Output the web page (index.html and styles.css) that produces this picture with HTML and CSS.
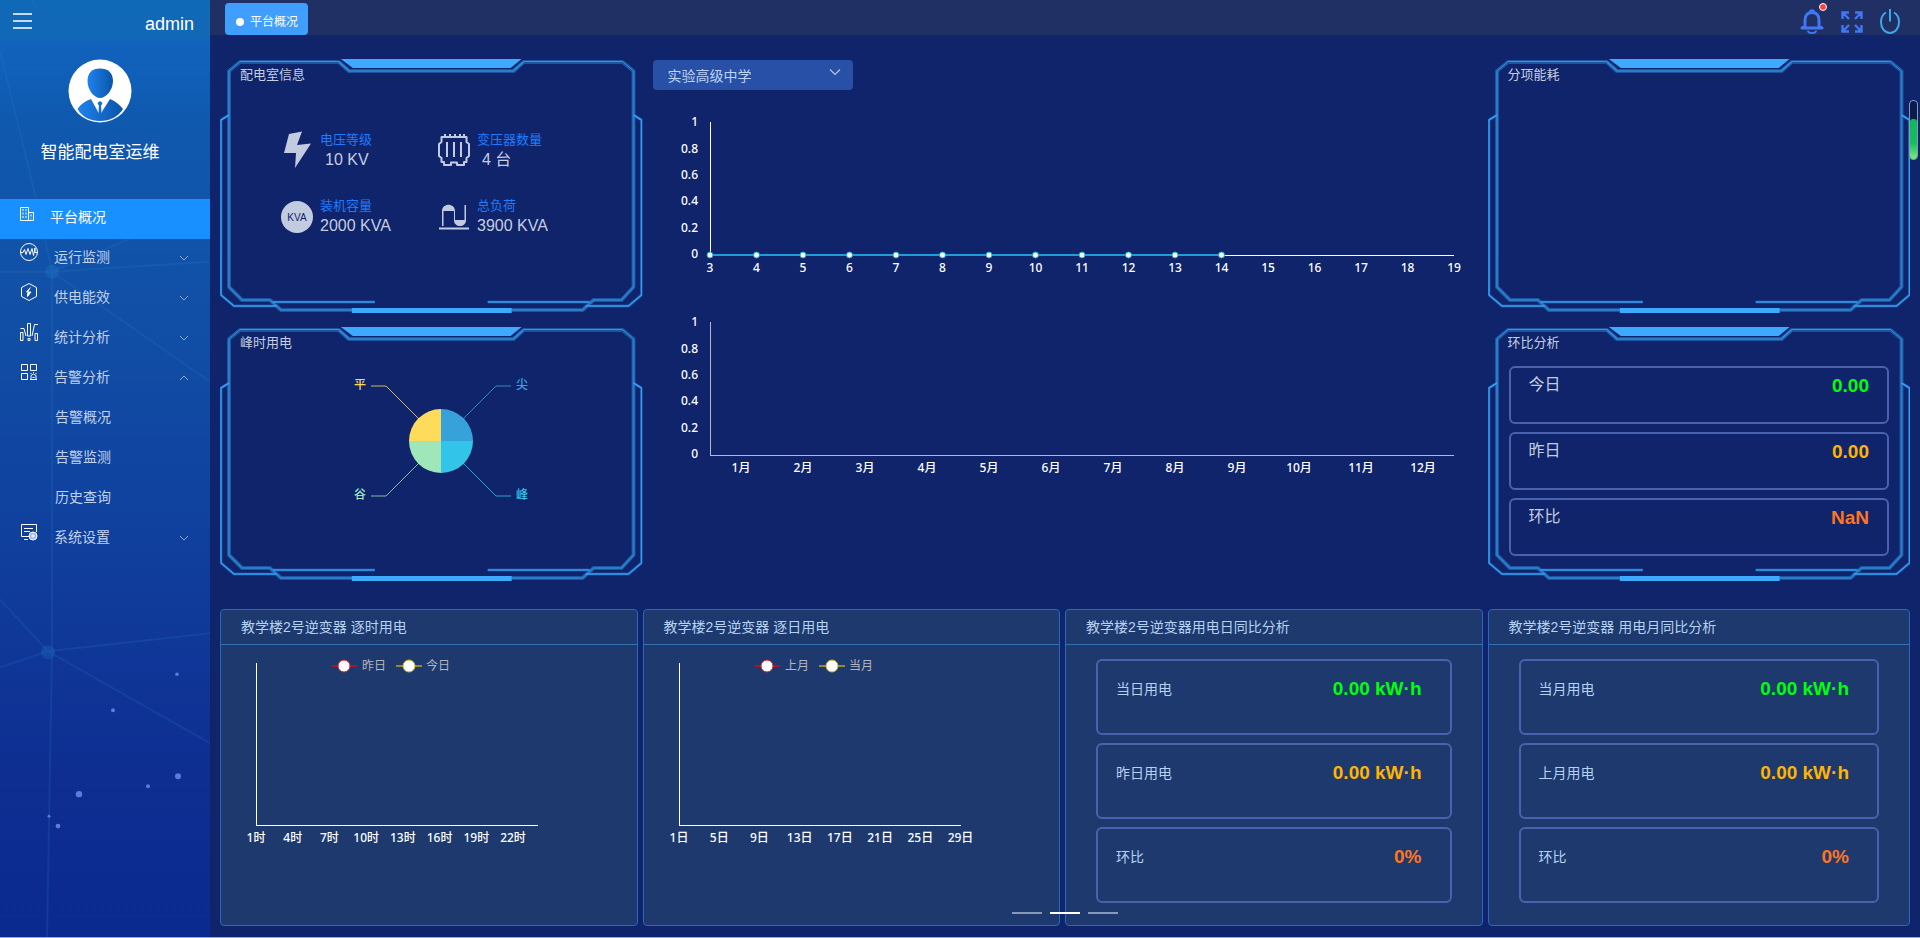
FILE: index.html
```html
<!DOCTYPE html>
<html lang="zh-CN">
<head>
<meta charset="utf-8">
<title>智能配电室运维</title>
<link rel="stylesheet" href="styles.css">
</head>
<body>
<svg class="defs" aria-hidden="true">
  <symbol id="frame" viewBox="0 0 423 254" preserveAspectRatio="none">
    <g fill="none" stroke-linejoin="round">
      <g stroke="#1c559f" stroke-width="4">
        <path d="M9 12 20 3H119L129 12H294L304 3H403L414 12V228L402 241H374L363 251H61L50 241H22L9 228Z"/>
      </g>
      <g stroke="#1a4b98" stroke-width="3">
        <path d="M9 56 1 61V236L14 247H57M53 243H155M414 56 422 61V236L409 247H366M370 243H268"/>
      </g>
      <path stroke="#2a7ccb" stroke-width="2" d="M9 12V228L22 241H50L61 251H363L374 241H402L414 228V12M119 3 129 12H294L304 3"/>
      <path stroke="#3496e8" stroke-width="1" d="M9 12 20 2.500H119L129 11M294 11 304 2.500H403L414 12"/>
      <path stroke="#37a0f5" stroke-width="1.500" d="M9 56 1 61V236L14 247H57M53 243H155M414 56 422 61V236L409 247H366M370 243H268"/>
    </g>
    <path fill="#3da9ff" d="M121 0H302L291 9H133ZM132 249H292V254H132Z"/>
  </symbol>
  <symbol id="chev" viewBox="0 0 10 10"><path d="M1 3 5 7 9 3" fill="none" stroke="currentColor"/></symbol>
</svg>

<div class="app">
  <aside class="sidebar">
    <svg class="stars" viewBox="0 0 210 938" preserveAspectRatio="none" aria-hidden="true">
      <g stroke="#2f86cf" fill="none" opacity=".16" stroke-width="2">
        <path d="M0 50 36 199 52 272 52 652 47 938M52 272H0M52 272 130 239M52 272 210 262M52 272 210 382M48 652 0 600M48 652 0 668M48 652 210 634M48 652 210 744M32 0 36 8"/>
      </g>
      <g fill="#2a8fd0" opacity=".2"><circle cx="52" cy="272" r="7"/><circle cx="48" cy="653" r="7"/></g>
      <g fill="#5d7bdc"><circle cx="177" cy="675" r="1.800"/><circle cx="113" cy="711" r="2"/><circle cx="178" cy="777" r="3"/><circle cx="148" cy="787" r="2"/><circle cx="79" cy="795" r="3.200"/><circle cx="49" cy="817" r="1.500"/><circle cx="58" cy="827" r="2.400"/></g>
    </svg>
    <div class="side-top">
      <button class="icon-btn" aria-label="折叠菜单"><svg width="20" height="16" viewBox="0 0 20 16"><path d="M0 1H19M0 8H19M0 15H19" stroke="#fff" stroke-width="1.400"/></svg></button>
      <span class="user">admin</span>
    </div>
    <div class="profile">
      <svg width="64" height="64" viewBox="0 0 64 64" aria-hidden="true">
        <defs><linearGradient id="av"><stop offset="0" stop-color="#1f82ee"/><stop offset="1" stop-color="#0a55a8"/></linearGradient></defs>
        <circle cx="32" cy="32" r="31.500" fill="#fff"/>
        <path fill="url(#av)" d="M32 9.500C40 9.500 45 14 45 22C45 31 38 39 32 39C26 39 19.500 31 19.500 22C19.500 14 24 9.500 32 9.500Z"/>
        <path fill="url(#av)" d="M23 40 29 51 31 47 29.500 44 32 42 34.500 44 33 47 35 51 42 40C47 42 52 46 55 50C50 58 42 62 32 62C22 62 14 58 9.500 50C13 45 17 42 23 40Z"/>
        <path fill="#fff" d="M29 51 31 46 30.500 54ZM35 51 33 46 33.500 54Z"/>
      </svg>
      <h1>智能配电室运维</h1>
    </div>
    <nav class="menu">
      <a href="#" class="item active"><svg class="mi" viewBox="0 0 18 18"><path d="M.5 2.500H8.500V15.500H.5ZM8.500 7.500H13.500V15.500H8.500" /><path stroke-dasharray="2 1.500" d="M3 4V14M6 4V14M11 9.500V13.500"/></svg><span>平台概况</span></a>
      <a href="#" class="item"><svg class="mi" viewBox="0 0 18 18"><circle cx="9" cy="9" r="8.500"/><path d="M1 9.500H3L4.500 6.500 6 11.500 8 5.500 10 11.500 12 5.500 13.500 12.500 15 5V9.500H17"/></svg><span>运行监测</span><svg class="arrow"><use href="#chev"/></svg></a>
      <a href="#" class="item"><svg class="mi" viewBox="0 0 18 18"><path d="M9 .5 16.500 4.500V13.500L9 17.500 1.500 13.500V4.500Z"/><path fill="#fff" d="M10.500 4.500 6.500 9H11L7.500 13.500V10.500"/></svg><span>供电能效</span><svg class="arrow"><use href="#chev"/></svg></a>
      <a href="#" class="item"><svg class="mi" viewBox="0 0 18 18"><path d="M.5 9.500H3V17.500H.5ZM7.500.5H10.500V13H7.500ZM15 10.500H17.500V17.500H15ZM8 15.500H10V17.500H8ZM.5 5.500H4L6 13M18 1.500H14.500L12 13"/></svg><span>统计分析</span><svg class="arrow"><use href="#chev"/></svg></a>
      <a href="#" class="item"><svg class="mi" viewBox="0 0 18 18"><path d="M1.500 1.500H7.500V7.500H1.500ZM10.500 1.500H16.500V7.500H10.500ZM1.500 10.500H7.500V16.500H1.500ZM10 16.500H17M11 16V12.500L13.500 11 16 12.500V16M12.500 14.500H14.500M13.500 9V10M10.500 10 11.500 11M16.500 10 15.500 11"/></svg><span>告警分析</span><svg class="arrow up"><use href="#chev"/></svg></a>
      <a href="#" class="item sub"><span>告警概况</span></a>
      <a href="#" class="item sub"><span>告警监测</span></a>
      <a href="#" class="item sub"><span>历史查询</span></a>
      <a href="#" class="item"><svg class="mi" viewBox="0 0 18 18"><path d="M9 13.500H1.500V1.500H16.500V9M4 5.500H13M4 8.500H10M4 16.500H8"/><circle cx="13" cy="13" r="4" fill="#9fb8e6"/><circle cx="13" cy="13" r="1.200"/></svg><span>系统设置</span><svg class="arrow"><use href="#chev"/></svg></a>
    </nav>
  </aside>

  <main class="main">
    <header class="topbar">
      <button class="tab"><i></i>平台概况</button>
      <div class="tools">
        <button class="icon-btn bell" aria-label="告警"><svg width="24" height="25" viewBox="0 0 24 25"><path d="M5 17V11C5 6 8 3.500 12 3.500C16 3.500 19 6 19 11V17L22 19H2Z" fill="none" stroke="#4077f5" stroke-width="3" stroke-linejoin="round"/><path d="M8 21.500A4 2.500 0 0 0 16 21.500M10 3C10 .5 14 .5 14 3" fill="none" stroke="#4077f5" stroke-width="2"/></svg><i class="badge"></i></button>
        <button class="icon-btn" aria-label="全屏"><svg width="22" height="24" viewBox="0 -2 22 24"><path d="M1.500 8V1.500H8M2 2 8 8M14 1.500H20.500V8M20 2 14 8M1.500 14V20.500H8M2 20 8 14M14 20.500H20.500V14M20 20 14 14" fill="none" stroke="#4077f5" stroke-width="2.400"/></svg></button>
        <button class="icon-btn" aria-label="退出"><svg width="20" height="25" viewBox="0 0 20 25"><path d="M6 3.500C2.500 5.500 1 9 1 13C1 19.500 5 24 10 24C15 24 19 19.500 19 13C19 9 17.500 5.500 14 3.500M10 0V12.500" fill="none" stroke="#3ca9ea" stroke-width="2"/></svg></button>
      </div>
    </header>

    <div class="content">
      <div class="upper">
        <div class="col">
          <section class="panel">
            <svg class="frame"><use href="#frame"/></svg>
            <h2>配电室信息</h2>
            <div class="stats">
              <div class="stat"><svg width="32" height="40" viewBox="0 0 32 40"><path fill="#c3cbe0" d="M8 4 21 1.500 16 15 30 13.500 14 38 15 23H3Z"/></svg><dl><dt>电压等级</dt><dd class="in">10 KV</dd></dl></div>
              <div class="stat"><svg width="32" height="40" viewBox="0 0 32 40"><path fill="none" stroke="#c3cbe0" stroke-width="2" stroke-linejoin="round" d="M3.500 7H28.500V12L31 14V26L28.500 28V32H26V35H19V32.500H13V35H6V32H3.500V28L1 26V14L3.500 12ZM7 7V4M12 7V4M17 7V4M22 7V4M26 7V4M9 12V27M16 12V27M23 12V27"/></svg><dl><dt>变压器数量</dt><dd class="in">4 台</dd></dl></div>
              <div class="stat"><svg width="32" height="40" viewBox="0 0 32 40"><circle cx="16" cy="21" r="16" fill="#c3cbe0"/><text class="kva" x="16" y="25">KVA</text></svg><dl><dt>装机容量</dt><dd>2000 KVA</dd></dl></div>
              <div class="stat"><svg width="32" height="40" viewBox="0 0 32 40"><path fill="#c3cbe0" fill-rule="evenodd" d="M4 30V15C4 6.500 17 6.500 17 15V24H26.500V9H28V24C28 32 16 32 16 24V15H5.500V30ZM1 31.500H31V33.500H1Z"/></svg><dl><dt>总负荷</dt><dd>3900 KVA</dd></dl></div>
            </div>
          </section>
          <section class="panel">
            <svg class="frame"><use href="#frame"/></svg>
            <h2>峰时用电</h2>
            <svg class="pie" width="200" height="128" viewBox="-100 -64 200 128">
              <path fill="#37a2da" d="M0 0V-32A32 32 0 0 1 32 0Z"/><path fill="#32c5e9" d="M0 0H32A32 32 0 0 1 0 32Z"/><path fill="#9fe6b8" d="M0 0V32A32 32 0 0 1 -32 0Z"/><path fill="#ffdb5c" d="M0 0H-32A32 32 0 0 1 0 -32Z"/>
              <g fill="none" opacity=".8"><path stroke="#37a2da" d="M22 -22 55 -55H70"/><path stroke="#32c5e9" d="M22 22 55 55H70"/><path stroke="#9fe6b8" d="M-22 22 -55 55H-70"/><path stroke="#ffdb5c" d="M-22 -22 -55 -55H-70"/></g>
              <text x="75" y="-52" fill="#37a2da">尖</text><text x="75" y="58" fill="#32c5e9">峰</text><text class="e" x="-75" y="58" fill="#9fe6b8">谷</text><text class="e" x="-75" y="-52" fill="#ffdb5c">平</text>
            </svg>
          </section>
        </div>

        <div class="center">
          <div class="picker"><select aria-label="站点"><option>实验高级中学</option></select><svg width="12" height="12" viewBox="0 0 12 12"><path d="M1 3.500 6 8.500 11 3.500" fill="none" stroke="#b9c6e2" stroke-width="1.200"/></svg></div>
          <svg class="chart" height="200">
            <g class="axis"><line x1="0" y1="0" x2="0" y2="133"/><line x1="0" y1="133" x2="100%" y2="133"/></g>
            <g class="e"><text x="-12" y="4">1</text><text x="-12" y="31">0.8</text><text x="-12" y="57">0.6</text><text x="-12" y="83">0.4</text><text x="-12" y="110">0.2</text><text x="-12" y="136">0</text></g>
            <line x1="0" y1="133" x2="68.750%" y2="133" stroke="#1d9fd4" stroke-width="2"/>
            <g fill="#fff" stroke="#1d9fd4"><circle cx="0" cy="133" r="3"/><circle cx="6.250%" cy="133" r="3"/><circle cx="12.500%" cy="133" r="3"/><circle cx="18.750%" cy="133" r="3"/><circle cx="25%" cy="133" r="3"/><circle cx="31.250%" cy="133" r="3"/><circle cx="37.500%" cy="133" r="3"/><circle cx="43.750%" cy="133" r="3"/><circle cx="50%" cy="133" r="3"/><circle cx="56.250%" cy="133" r="3"/><circle cx="62.500%" cy="133" r="3"/><circle cx="68.750%" cy="133" r="3"/></g>
            <g class="m"><text x="0" y="150">3</text><text x="6.250%" y="150">4</text><text x="12.500%" y="150">5</text><text x="18.750%" y="150">6</text><text x="25%" y="150">7</text><text x="31.250%" y="150">8</text><text x="37.500%" y="150">9</text><text x="43.750%" y="150">10</text><text x="50%" y="150">11</text><text x="56.250%" y="150">12</text><text x="62.500%" y="150">13</text><text x="68.750%" y="150">14</text><text x="75%" y="150">15</text><text x="81.250%" y="150">16</text><text x="87.500%" y="150">17</text><text x="93.750%" y="150">18</text><text x="100%" y="150">19</text></g>
          </svg>
          <svg class="chart" height="200">
            <g class="axis grey"><line x1="0" y1="0" x2="0" y2="133"/><line x1="0" y1="133" x2="100%" y2="133"/></g>
            <g class="e"><text x="-12" y="4">1</text><text x="-12" y="31">0.8</text><text x="-12" y="57">0.6</text><text x="-12" y="83">0.4</text><text x="-12" y="110">0.2</text><text x="-12" y="136">0</text></g>
            <g class="m"><text x="4.167%" y="150">1月</text><text x="12.500%" y="150">2月</text><text x="20.833%" y="150">3月</text><text x="29.167%" y="150">4月</text><text x="37.500%" y="150">5月</text><text x="45.833%" y="150">6月</text><text x="54.167%" y="150">7月</text><text x="62.500%" y="150">8月</text><text x="70.833%" y="150">9月</text><text x="79.167%" y="150">10月</text><text x="87.500%" y="150">11月</text><text x="95.833%" y="150">12月</text></g>
          </svg>
        </div>

        <div class="col">
          <section class="panel"><svg class="frame"><use href="#frame"/></svg><h2>分项能耗</h2></section>
          <section class="panel">
            <svg class="frame"><use href="#frame"/></svg>
            <h2>环比分析</h2>
            <div class="cards compact">
              <div class="card"><span>今日</span><b class="green">0.00</b></div>
              <div class="card"><span>昨日</span><b class="amber">0.00</b></div>
              <div class="card"><span>环比</span><b class="red">NaN</b></div>
            </div>
          </section>
        </div>
      </div>

      <div class="lower">
        <section class="box">
          <h2>教学楼2号逆变器 逐时用电</h2>
          <svg class="chart small" height="180">
            <g class="axis"><line x1="0" y1="0" x2="0" y2="162"/><line x1="0" y1="162" x2="100%" y2="162"/></g>
            <g class="legend"><path d="M76 3H101" stroke="#a5182b" stroke-width="2"/><circle cx="88" cy="3" r="6" stroke="#d0202c"/><text x="106" y="7">昨日</text><path d="M140 3H166" stroke="#948a33" stroke-width="2"/><circle cx="153" cy="3" r="6" stroke="#c9b520"/><text x="170" y="7">今日</text></g>
            <g class="m"><text x="0" y="179">1时</text><text x="13.043%" y="179">4时</text><text x="26.087%" y="179">7时</text><text x="39.130%" y="179">10时</text><text x="52.174%" y="179">13时</text><text x="65.217%" y="179">16时</text><text x="78.261%" y="179">19时</text><text x="91.304%" y="179">22时</text></g>
          </svg>
        </section>
        <section class="box">
          <h2>教学楼2号逆变器 逐日用电</h2>
          <svg class="chart small" height="180">
            <g class="axis"><line x1="0" y1="0" x2="0" y2="162"/><line x1="0" y1="162" x2="100%" y2="162"/></g>
            <g class="legend"><path d="M76 3H101" stroke="#a5182b" stroke-width="2"/><circle cx="88" cy="3" r="6" stroke="#d0202c"/><text x="106" y="7">上月</text><path d="M140 3H166" stroke="#948a33" stroke-width="2"/><circle cx="153" cy="3" r="6" stroke="#c9b520"/><text x="170" y="7">当月</text></g>
            <g class="m"><text x="0" y="179">1日</text><text x="14.286%" y="179">5日</text><text x="28.571%" y="179">9日</text><text x="42.857%" y="179">13日</text><text x="57.143%" y="179">17日</text><text x="71.429%" y="179">21日</text><text x="85.714%" y="179">25日</text><text x="100%" y="179">29日</text></g>
          </svg>
        </section>
        <section class="box">
          <h2>教学楼2号逆变器用电日同比分析</h2>
          <div class="cards">
            <div class="card"><span>当日用电</span><b class="green">0.00 kW·h</b></div>
            <div class="card"><span>昨日用电</span><b class="amber">0.00 kW·h</b></div>
            <div class="card"><span>环比</span><b class="red">0%</b></div>
          </div>
        </section>
        <section class="box">
          <h2>教学楼2号逆变器 用电月同比分析</h2>
          <div class="cards">
            <div class="card"><span>当月用电</span><b class="green">0.00 kW·h</b></div>
            <div class="card"><span>上月用电</span><b class="amber">0.00 kW·h</b></div>
            <div class="card"><span>环比</span><b class="red">0%</b></div>
          </div>
        </section>
        <div class="pager"><button aria-label="第1页"></button><button class="on" aria-label="第2页"></button><button aria-label="第3页"></button></div>
      </div>
    </div>
    <div class="gauge" aria-hidden="true"><i></i></div>
  </main>
</div>
</body>
</html>
```
FILE: styles.css
```css
* { box-sizing: border-box; }
body { margin: 0; background: #0f246b; color: #c6cde0; font: 14px/20px "Liberation Sans", "Noto Sans CJK SC", sans-serif; }
h1, h2, dl, dd { margin: 0; font-weight: 400; }
button { border: 0; padding: 0; background: none; font: inherit; color: inherit; cursor: pointer; }
svg { display: block; }
.defs { position: absolute; width: 0; height: 0; }
.icon-btn { display: flex; }

.app { display: flex; min-height: 100vh; border-bottom: 1px solid #8fb0c4; }

/* Sidebar */
.sidebar {
  position: relative; flex: none; width: 210px;
  background: linear-gradient(180deg, #1069b6 0, #1168b7 4%, #1162bd 5%, #0f59ae 13%, #1055ab 22%, #1150a6 32%, #1047a2 46%, #103e9d 60%, #0f3899 68%, #0e2e92 82%, #0b2a90 100%);
}
.stars { position: absolute; inset: 0; width: 100%; height: 100%; }
.side-top, .profile, .menu { position: relative; }
.side-top { display: flex; justify-content: space-between; align-items: flex-start; padding: 13px 16px 0 13px; }
.user { font-size: 18px; line-height: 22px; color: #fff; }
.profile { display: flex; flex-direction: column; align-items: center; padding: 24px 10px 33px 0; }
.profile h1 { margin-top: 17px; font-size: 17px; line-height: 26px; color: #fff; }
.menu { display: flex; flex-direction: column; }
.item { display: flex; align-items: center; height: 40px; padding: 0 21px 0 20px; color: #c0d1ea; text-decoration: none; }
.item span { flex: 1; margin-left: 16px; line-height: 36px; height: 40px; }
.mi { width: 18px; height: 18px; margin-bottom: 14px; fill: none; stroke: #fff; stroke-width: 1; }
.arrow { width: 10px; height: 10px; margin-bottom: 3px; color: #8fa6cf; }
.up { transform: rotate(180deg); }
.sub span { margin-left: 35px; }
.active { background: #1890ff; color: #fff; }
.active .mi { margin-bottom: 10px; }
.active span { margin-left: 12px; }

/* Top bar */
.main { position: relative; flex: 1; min-width: 0; }
.topbar { display: flex; justify-content: space-between; align-items: flex-start; height: 35px; padding: 3px 20px 0 15px; background: #202f64; }
.tab { display: flex; align-items: center; gap: 6px; height: 32px; padding: 6px 10px 0 11px; border-radius: 4px; background: #409eff; color: #fff; font-size: 12px; }
.tab i { width: 8px; height: 8px; border-radius: 50%; background: #fff; }
.tools { display: flex; align-items: flex-start; gap: 17px; padding-top: 6px; }
.bell { position: relative; }
.badge { position: absolute; top: -6px; right: -3px; width: 8px; height: 8px; border: 1px solid #fff; border-radius: 50%; background: #ff4242; }

.content { padding: 24px 10px 11px; }
.upper { display: grid; grid-template-columns: 1fr 2fr 1fr; }
.col { display: grid; gap: 14px; align-content: start; }

/* Framed panels */
.panel { position: relative; min-height: 254px; padding: 6px 21px 15px 20px; }
.frame { position: absolute; inset: 0; width: 100%; height: 100%; }
.panel h2 { position: relative; font-size: 13px; line-height: 20px; }
.stats { position: relative; display: grid; grid-template-columns: 157px 1fr; row-gap: 26px; padding: 45px 0 0 41px; }
.stat { display: flex; gap: 7px; }
.stat dt { font-size: 13px; line-height: 20px; color: #1f7cff; }
.stat dd { font-size: 16px; line-height: 20px; }
.stat .in { text-indent: 5px; }
.pie { position: relative; margin: 24px auto 0; left: 10px; }
text { font: 500 12px "Noto Sans", "Noto Sans CJK SC", sans-serif; }
.e { text-anchor: end; }
.m { text-anchor: middle; }
.kva { font: 10px "Liberation Sans", sans-serif; text-anchor: middle; fill: #10246b; }

/* Charts */
.center { padding: 1px 34px 0 10px; }
.picker { position: relative; width: 200px; }
.picker select { display: block; width: 100%; height: 30px; padding: 2px 30px 0 15px; border: 0; border-radius: 4px; appearance: none; background: #2850a6; color: #bcd4f5; font: inherit; }
.picker svg { position: absolute; top: 6px; right: 12px; pointer-events: none; }
.chart { width: 100%; overflow: visible; fill: #fff; }
.center .chart { width: calc(100% - 57px); margin-left: 57px; }
.picker + .chart { margin-top: 32px; }
.axis { stroke: #fff; shape-rendering: crispEdges; }
.grey { stroke: #b4bac8; }
.legend { fill: #fff; }
.legend text { fill: #b3b6bf; font-weight: 400; }

/* Metric cards */
.cards { display: grid; gap: 8px; padding: 14px 30px 20px; }
.card { display: flex; justify-content: space-between; align-items: flex-start; min-height: 76px; padding: 18px 28px 0 18px; border: 2px solid #4a62ad; border-radius: 6px; color: #b5d1f3; }
.card b { font-size: 19px; line-height: 20px; }
.compact { position: relative; padding: 13px 0 0 1px; }
.compact .card { min-height: 58px; padding: 7px 18px 0; font-size: 16px; color: #c6cde0; }
.compact b { line-height: 22px; }
.green { color: #00ff0c; }
.amber { color: #ffb400; }
.red { color: #ff7420; }

/* Lower row */
.lower { position: relative; display: grid; grid-template-columns: repeat(4, 1fr); margin-top: 28px; }
.box { min-height: 317px; margin-right: 5px; border: 1px solid #2967c1; border-radius: 4px; background: #1e396e; }
.box:nth-child(4) { margin-right: 0; }
.box h2 { height: 35px; padding: 0 20px; border-bottom: 1px solid #3473b0; font-size: 14px; line-height: 34px; color: #b5d1f3; }
.box .small { width: calc(100% - 134px); margin: 18px 0 0 35px; }
.pager { position: absolute; left: 0; right: 0; bottom: 12px; display: flex; justify-content: center; gap: 8px; }
.pager button { width: 30px; height: 2px; background: #8a97b8; }
.pager .on { background: #fff; }

.gauge { position: absolute; top: 100px; right: 2px; width: 9px; height: 60px; padding-top: 18px; border: 1px solid #8c97b8; border-radius: 4px; background: #0a1b50; }
.gauge i { display: block; height: 100%; border-radius: 3px; background: linear-gradient(#0fb75c 0, #16bd5f 60%, #7dec7c 100%); }
```
